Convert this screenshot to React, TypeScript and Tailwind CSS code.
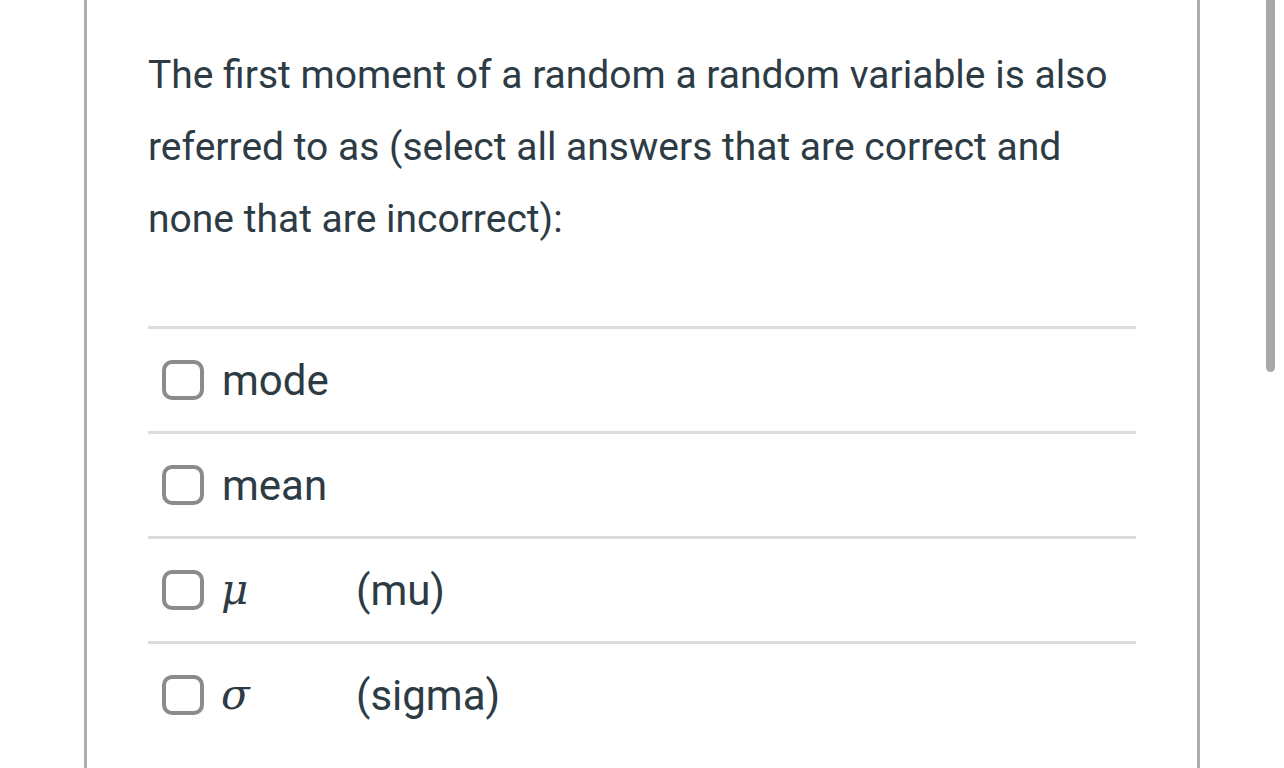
import React from "react";

type Option = {
    label: string;
    math?: boolean;
    note?: string;
};

const OPTIONS: Option[] = [
    { label: "mode" },
    { label: "mean" },
    { label: "μ", math: true, note: "(mu)" },
    { label: "σ", math: true, note: "(sigma)" },
];

function Checkbox() {
    return <span className="w-[42px] h-[40px] shrink-0 rounded-[10px] border-[4px] border-[#8b8b8b] bg-white" />;
}

export default function App() {
    return (
        <div className="relative w-[1284px] h-[768px] overflow-hidden bg-white font-['Roboto',sans-serif] text-[#2d3b45]">
            {/* Question card */}
            <div className="ml-[84px] w-[1116px] h-full border-x-[3px] border-[#adadad] px-[61px] pt-[39px]">
                <p className="text-[39px] leading-[72px]">
                    The first moment of a random a random variable is also referred to as (select all answers that are correct and none that are incorrect):
                </p>

                <div className="mt-[71px]">
                    {OPTIONS.map((opt) => (
                        <div
                            key={opt.label}
                            className="flex items-center h-[105px] border-t-[3px] border-[#dcdcdc] pl-[14px]"
                        >
                            <Checkbox />
                            {opt.math ? (
                                <>
                                    <span className="ml-[17px] w-[135px] font-['DejaVu_Serif',serif] italic text-[42px] leading-none">
                                        {opt.label}
                                    </span>
                                    <span className="text-[42px]">{opt.note}</span>
                                </>
                            ) : (
                                <span className="ml-[18px] text-[42px]">{opt.label}</span>
                            )}
                        </div>
                    ))}
                </div>
            </div>

            {/* Scrollbar thumb */}
            <div className="absolute left-[1266px] top-0 w-[9px] h-[372px] rounded-b-full bg-[#a8a8a8]" />
        </div>
    );
}
